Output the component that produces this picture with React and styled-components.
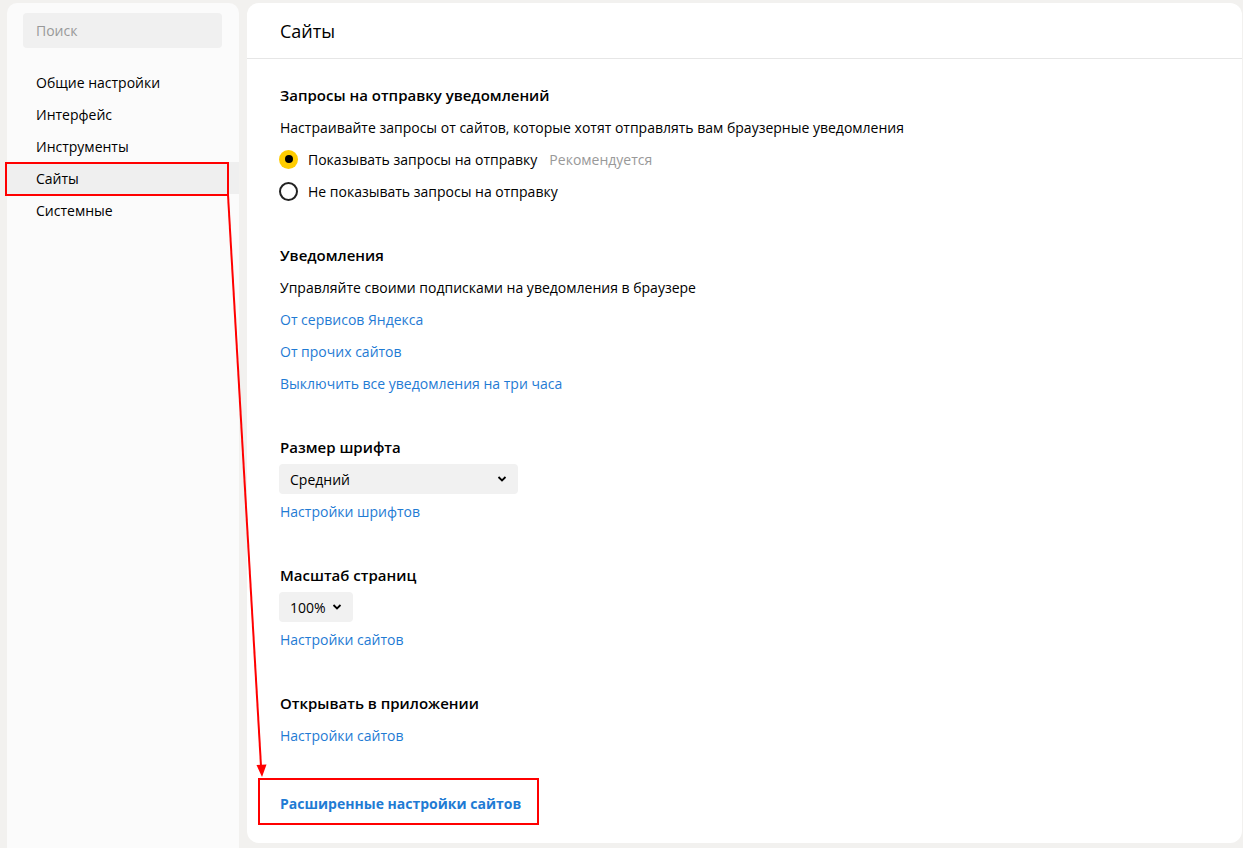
import styled, { createGlobalStyle } from 'styled-components';

const GlobalStyle = createGlobalStyle`
  body {
    margin: 0;
    background: #f2f1ef;
    font-family: "Open Sans", "Noto Sans", sans-serif;
    color: #000;
  }
`;

const Page = styled.div`
  position: relative;
  display: flex;
  gap: 8px;
  height: 848px;
  padding: 3px 1px 0 7px;
  box-sizing: border-box;
  overflow: hidden;
`;

const Sidebar = styled.aside`
  width: 232px;
  flex-shrink: 0;
  background: #fbfbfb;
  border-radius: 10px 10px 0 0;
  padding-top: 10px;
  box-sizing: border-box;
`;

const Search = styled.div`
  margin: 0 17px 18px 16px;
  height: 35px;
  background: #f0f0f0;
  border-radius: 4px;
  display: flex;
  align-items: center;
  padding-left: 13px;
  color: #999;
  font-size: 14px;
`;

const NavItem = styled.div`
  height: 32px;
  display: flex;
  align-items: center;
  padding-left: 29px;
  font-size: 14px;
  background: ${p => (p.$active ? '#efefef' : 'transparent')};
`;

const Main = styled.main`
  flex: 1;
  height: 840px;
  background: #fff;
  border-radius: 12px;
`;

const Header = styled.div`
  height: 55px;
  border-bottom: 1px solid #e6e6e6;
  display: flex;
  align-items: center;
  padding-left: 33px;
  font-size: 18px;
`;

const Content = styled.div`
  padding: 20px 0 0 33px;
  display: flex;
  flex-direction: column;
  gap: 32px;
`;

const Section = styled.section`
  display: flex;
  flex-direction: column;
  margin-top: ${p => p.$mt || 0}px;
`;

const Row = styled.div`
  height: 32px;
  display: flex;
  align-items: center;
  font-size: 14px;
`;

const Heading = styled(Row)`
  font-size: 15px;
  font-weight: 600;
`;

const Link = styled(Row)`
  color: #1f7bd4;
  font-weight: ${p => (p.$bold ? 700 : 400)};
`;

const Radio = styled.span`
  width: 19px;
  height: 19px;
  border-radius: 50%;
  box-sizing: border-box;
  margin: 0 10px 0 -1px;
  display: flex;
  align-items: center;
  justify-content: center;
  background: ${p => (p.$checked ? '#fc0' : 'transparent')};
  border: ${p => (p.$checked ? 'none' : '2px solid #222')};
  &::after {
    content: '';
    display: ${p => (p.$checked ? 'block' : 'none')};
    width: 8px;
    height: 8px;
    border-radius: 50%;
    background: #000;
  }
`;

const Hint = styled.span`
  color: #999;
  margin-left: 12px;
`;

const Select = styled.div`
  width: ${p => p.$w}px;
  height: 30px;
  margin: 1px 0 1px -1px;
  background: #f1f1f1;
  border-radius: 4px;
  box-sizing: border-box;
  padding: 0 11px;
  display: flex;
  align-items: center;
  justify-content: space-between;
  font-size: 14px;
`;

const Overlay = styled.svg`
  position: absolute;
  inset: 0;
  pointer-events: none;
`;

const Chevron = () => (
  <svg width="10" height="6" viewBox="0 0 10 6">
    <path d="M1.5 1l3.5 3.5L8.5 1" stroke="#000" strokeWidth="1.8" fill="none" />
  </svg>
);

const navItems = ['Общие настройки', 'Интерфейс', 'Инструменты', 'Сайты', 'Системные'];

export default function App() {
  return (
    <>
      <GlobalStyle />
      <Page>
        <Sidebar>
          <Search>Поиск</Search>
          {navItems.map(n => (
            <NavItem key={n} $active={n === 'Сайты'}>{n}</NavItem>
          ))}
        </Sidebar>
        <Main>
          <Header>Сайты</Header>
          <Content>
            <Section>
              <Heading>Запросы на отправку уведомлений</Heading>
              <Row>Настраивайте запросы от сайтов, которые хотят отправлять вам браузерные уведомления</Row>
              <Row>
                <Radio $checked />
                Показывать запросы на отправку
                <Hint>Рекомендуется</Hint>
              </Row>
              <Row>
                <Radio />
                Не показывать запросы на отправку
              </Row>
            </Section>
            <Section>
              <Heading>Уведомления</Heading>
              <Row>Управляйте своими подписками на уведомления в браузере</Row>
              <Link>От сервисов Яндекса</Link>
              <Link>От прочих сайтов</Link>
              <Link>Выключить все уведомления на три часа</Link>
            </Section>
            <Section>
              <Heading>Размер шрифта</Heading>
              <Select $w={239}>
                Средний
                <Chevron />
              </Select>
              <Link>Настройки шрифтов</Link>
            </Section>
            <Section>
              <Heading>Масштаб страниц</Heading>
              <Select $w={74}>
                100%
                <Chevron />
              </Select>
              <Link>Настройки сайтов</Link>
            </Section>
            <Section>
              <Heading>Открывать в приложении</Heading>
              <Link>Настройки сайтов</Link>
            </Section>
            <Section $mt={4}>
              <Link $bold>Расширенные настройки сайтов</Link>
            </Section>
          </Content>
        </Main>
        <Overlay width="1243" height="848">
          <rect x="6" y="163" width="222" height="32" fill="none" stroke="#f00" strokeWidth="2" />
          <rect x="259" y="779" width="279" height="45" fill="none" stroke="#f00" strokeWidth="2" />
          <line x1="228" y1="195" x2="261" y2="766" stroke="#f00" strokeWidth="2" />
          <path d="M256.5 765 L262 777 L266.5 764.5 Z" fill="#f00" />
        </Overlay>
      </Page>
    </>
  );
}
